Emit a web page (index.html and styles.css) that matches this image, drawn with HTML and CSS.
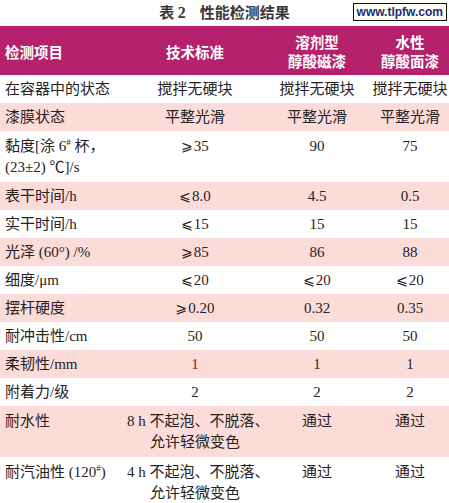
FILE: index.html
```html
<!DOCTYPE html>
<html lang="zh">
<head>
<meta charset="utf-8">
<title>表2 性能检测结果</title>
<link rel="stylesheet" href="styles.css">
</head>
<body>
<div class="page">
  <div class="caption">
    <span class="cap-no">表 <b class="num">2</b></span><span class="cap-title">性能检测结果</span>
    <span class="mark">www.tlpfw.com</span>
  </div>
  <table class="results">
    <colgroup>
      <col class="c1"><col class="c2"><col class="c3"><col class="c4">
    </colgroup>
    <thead>
      <tr>
        <th class="left">检测项目</th>
        <th>技术标准</th>
        <th>溶剂型<br>醇酸磁漆</th>
        <th>水性<br>醇酸面漆</th>
      </tr>
    </thead>
    <tbody>
      <tr><td class="left">在容器中的状态</td><td>搅拌无硬块</td><td>搅拌无硬块</td><td>搅拌无硬块</td></tr>
      <tr class="alt"><td class="left">漆膜状态</td><td>平整光滑</td><td>平整光滑</td><td>平整光滑</td></tr>
      <tr class="tall"><td class="left">黏度[涂 6<sup>#</sup> 杯，<br>(23±2) ℃]/s</td><td><span class="cmp">⩾</span>35</td><td>90</td><td>75</td></tr>
      <tr class="alt"><td class="left">表干时间/h</td><td><span class="cmp">⩽</span>8.0</td><td>4.5</td><td>0.5</td></tr>
      <tr><td class="left">实干时间/h</td><td><span class="cmp">⩽</span>15</td><td>15</td><td>15</td></tr>
      <tr class="alt"><td class="left">光泽 (60°) /%</td><td><span class="cmp">⩾</span>85</td><td>86</td><td>88</td></tr>
      <tr><td class="left">细度/μm</td><td><span class="cmp">⩽</span>20</td><td><span class="cmp">⩽</span>20</td><td><span class="cmp">⩽</span>20</td></tr>
      <tr class="alt"><td class="left">摆杆硬度</td><td><span class="cmp">⩾</span>0.20</td><td>0.32</td><td>0.35</td></tr>
      <tr><td class="left">耐冲击性/cm</td><td>50</td><td>50</td><td>50</td></tr>
      <tr class="alt"><td class="left">柔韧性/mm</td><td class="red">1</td><td>1</td><td>1</td></tr>
      <tr><td class="left">附着力/级</td><td>2</td><td>2</td><td>2</td></tr>
      <tr class="alt tall"><td class="left">耐水性</td><td class="wrap">8 h 不起泡、不脱落、<br>允许轻微变色</td><td>通过</td><td>通过</td></tr>
      <tr class="tall"><td class="left">耐汽油性 (120<sup>#</sup>)</td><td class="wrap">4 h 不起泡、不脱落、<br>允许轻微变色</td><td>通过</td><td>通过</td></tr>
    </tbody>
  </table>
</div>
</body>
</html>
```
FILE: styles.css
```css
* { box-sizing: border-box; }
html, body { margin: 0; padding: 0; background: #ffffff; }
body {
  font-family: "Liberation Serif", "Noto Sans CJK SC", serif;
  color: #262223;
}
.page { width: 449px; }
.caption {
  position: relative;
  height: 26px;
  display: flex;
  justify-content: center;
  align-items: flex-start;
  padding-top: 2px;
  font-family: "Noto Sans CJK SC", sans-serif;
  font-size: 15px;
  line-height: 20px;
  font-weight: 700;
  color: #3a3a3a;
}
.cap-no { margin-right: 14px; }
.cap-no .num { font-family: "Liberation Serif", serif; font-size: 16px; }
.mark {
  position: absolute;
  right: 2px;
  top: 3px;
  height: 18px;
  padding: 0 3px;
  border: 1px solid #111;
  background: #fffff4;
  font-family: "Liberation Sans", sans-serif;
  font-size: 12px;
  line-height: 16px;
  font-weight: 700;
  color: #1c2a7c;
}
.results {
  width: 449px;
  border-collapse: collapse;
  table-layout: fixed;
  border-bottom: 3px solid #b5216c;
}
.c1 { width: 127px; }
.c2 { width: 136px; }
.c3 { width: 108px; }
.c4 { width: 78px; }
thead th {
  background: #b5216c;
  color: #ffffff;
  font-family: "Noto Sans CJK SC", sans-serif;
  font-size: 14.5px;
  font-weight: 700;
  line-height: 19px;
  height: 49px;
  padding: 1px 0 0;
  text-align: center;
  vertical-align: middle;
}
th.left { text-align: left; padding-left: 5px; }
td {
  font-size: 15px;
  line-height: 20px;
  height: 28px;
  padding: 4px 0;
  text-align: center;
  vertical-align: top;
  white-space: nowrap;
  font-weight: 400;
}
td.left {
  text-align: left;
  padding-left: 5px;
}
.cmp {
  font-family: "DejaVu Sans", "Liberation Serif", sans-serif;
  font-size: 14px;
  margin-right: 1px;
}
tr.tall td { height: 48px; padding-top: 5px; line-height: 21px; }
tr.alt td { background: #fbdcd9; }
td.red { color: #7c1f24; }
td.wrap { text-align: center; }
sup { font-size: 9px; line-height: 0; vertical-align: 6px; }
```
